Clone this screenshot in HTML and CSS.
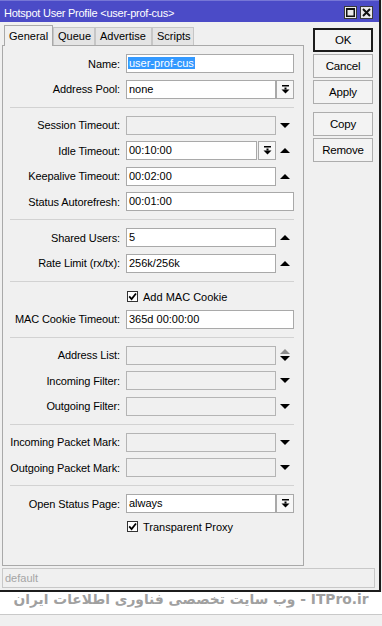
FILE: index.html
```html
<!DOCTYPE html>
<html lang="en">
<head>
  <meta charset="UTF-8" />
  <title>Hotspot User Profile</title>
  <link rel="stylesheet" href="styles.css">
</head>
<body>
  <div class="window">
    <div class="titlebar">
      <span class="title">Hotspot User Profile &lt;user-prof-cus&gt;</span>
      <div class="wbtns">
        <span class="wbtn"><svg width="9" height="9" viewBox="0 0 9 9"><rect x="0.75" y="0.75" width="7.5" height="7.5" fill="none" stroke="#111" stroke-width="1.5"/><rect x="0" y="0" width="9" height="2" fill="#111"/></svg></span>
        <span class="wbtn"><svg width="9" height="9" viewBox="0 0 9 9"><path d="M1 1 L8 8 M8 1 L1 8" stroke="#111" stroke-width="2"/></svg></span>
      </div>
    </div>

    <div class="content">
      <div class="main">
        <div class="tabs">
          <span class="tab active">General</span>
          <span class="tab t-queue">Queue</span>
          <span class="tab t-adv">Advertise</span>
          <span class="tab t-scripts">Scripts</span>
        </div>

        <div class="panel">
          <div class="row">
            <span class="lbl">Name:</span>
            <span class="field wide"><span class="sel">user-prof-cus</span></span>
          </div>
          <div class="row">
            <span class="lbl">Address Pool:</span>
            <span class="field">none</span>
            <span class="drop"><svg width="9" height="9" viewBox="0 0 9 9"><rect x="1" y="0" width="7" height="1.5"/><rect x="3.5" y="2.5" width="2" height="2"/><polygon points="0.5,4.5 8.5,4.5 4.5,8.5"/></svg></span>
          </div>
          <div class="sep"></div>

          <div class="row">
            <span class="lbl">Session Timeout:</span>
            <span class="field off"></span>
            <span class="side"><svg width="10" height="5" viewBox="0 0 10 5"><polygon points="0,0 10,0 5,5"/></svg></span>
          </div>
          <div class="row">
            <span class="lbl">Idle Timeout:</span>
            <span class="field idle">00:10:00</span>
            <span class="drop gap"><svg width="9" height="9" viewBox="0 0 9 9"><rect x="1" y="0" width="7" height="1.5"/><rect x="3.5" y="2.5" width="2" height="2"/><polygon points="0.5,4.5 8.5,4.5 4.5,8.5"/></svg></span>
            <span class="side"><svg width="10" height="5" viewBox="0 0 10 5"><polygon points="0,5 10,5 5,0"/></svg></span>
          </div>
          <div class="row">
            <span class="lbl">Keepalive Timeout:</span>
            <span class="field">00:02:00</span>
            <span class="side"><svg width="10" height="5" viewBox="0 0 10 5"><polygon points="0,5 10,5 5,0"/></svg></span>
          </div>
          <div class="row">
            <span class="lbl">Status Autorefresh:</span>
            <span class="field wide">00:01:00</span>
          </div>
          <div class="sep"></div>

          <div class="row">
            <span class="lbl">Shared Users:</span>
            <span class="field">5</span>
            <span class="side"><svg width="10" height="5" viewBox="0 0 10 5"><polygon points="0,5 10,5 5,0"/></svg></span>
          </div>
          <div class="row">
            <span class="lbl">Rate Limit (rx/tx):</span>
            <span class="field">256k/256k</span>
            <span class="side"><svg width="10" height="5" viewBox="0 0 10 5"><polygon points="0,5 10,5 5,0"/></svg></span>
          </div>
          <div class="sep"></div>

          <div class="row short">
            <span class="check"><span class="box"><svg width="9" height="9" viewBox="0 0 9 9"><path d="M1.2 4.4 L3.6 7 L8 1.5" fill="none" stroke="#000" stroke-width="1.8"/></svg></span>Add MAC Cookie</span>
          </div>
          <div class="row">
            <span class="lbl">MAC Cookie Timeout:</span>
            <span class="field wide">365d 00:00:00</span>
          </div>
          <div class="sep"></div>

          <div class="row">
            <span class="lbl">Address List:</span>
            <span class="field off"></span>
            <span class="side"><svg width="10" height="12" viewBox="0 0 10 12"><polygon points="0,5 10,5 5,0" fill="#8c8c8c"/><polygon points="0,7 10,7 5,12"/></svg></span>
          </div>
          <div class="row">
            <span class="lbl">Incoming Filter:</span>
            <span class="field off"></span>
            <span class="side"><svg width="10" height="5" viewBox="0 0 10 5"><polygon points="0,0 10,0 5,5"/></svg></span>
          </div>
          <div class="row">
            <span class="lbl">Outgoing Filter:</span>
            <span class="field off"></span>
            <span class="side"><svg width="10" height="5" viewBox="0 0 10 5"><polygon points="0,0 10,0 5,5"/></svg></span>
          </div>
          <div class="sep"></div>

          <div class="row">
            <span class="lbl">Incoming Packet Mark:</span>
            <span class="field off"></span>
            <span class="side"><svg width="10" height="5" viewBox="0 0 10 5"><polygon points="0,0 10,0 5,5"/></svg></span>
          </div>
          <div class="row">
            <span class="lbl">Outgoing Packet Mark:</span>
            <span class="field off"></span>
            <span class="side"><svg width="10" height="5" viewBox="0 0 10 5"><polygon points="0,0 10,0 5,5"/></svg></span>
          </div>
          <div class="sep"></div>

          <div class="row">
            <span class="lbl">Open Status Page:</span>
            <span class="field">always</span>
            <span class="drop"><svg width="9" height="9" viewBox="0 0 9 9"><rect x="1" y="0" width="7" height="1.5"/><rect x="3.5" y="2.5" width="2" height="2"/><polygon points="0.5,4.5 8.5,4.5 4.5,8.5"/></svg></span>
          </div>
          <div class="row short">
            <span class="check"><span class="box"><svg width="9" height="9" viewBox="0 0 9 9"><path d="M1.2 4.4 L3.6 7 L8 1.5" fill="none" stroke="#000" stroke-width="1.8"/></svg></span>Transparent Proxy</span>
          </div>
        </div>
      </div>

      <div class="actions">
        <span class="btn default">OK</span>
        <span class="btn">Cancel</span>
        <span class="btn">Apply</span>
        <span class="btn spaced">Copy</span>
        <span class="btn">Remove</span>
      </div>
    </div>

    <div class="status">default</div>
  </div>

  <div class="watermark">ITPro.ir - وب سایت تخصصی فناوری اطلاعات ایران</div>
</body>
</html>
```
FILE: styles.css
```css
/* Base */
* {
  box-sizing: border-box;
}
body {
  margin: 0;
  width: 382px;
  height: 626px;
  overflow: hidden;
  background: #f0f0f0;
  color: #000;
  font-family: 'Liberation Sans', Arial, sans-serif;
  font-size: 11px;
}

/* Window frame */
.window {
  width: 381px;
  height: 592px;
  background: #f0f0f0;
  border-right: 2px solid #1c1c1c;
  border-bottom: 2px solid #1c1c1c;
}
.titlebar {
  height: 22px;
  background: #4b4bc7;
  border-top: 1px solid #7676d6;
  color: #fff;
  padding: 0 4px;
  display: flex;
  align-items: center;
  justify-content: space-between;
}
.title {
  letter-spacing: -0.25px;
  padding-top: 2px;
}
.wbtns {
  display: flex;
  gap: 3px;
  margin-right: 2px;
  margin-top: 2px;
}
.wbtn {
  width: 13px;
  height: 13px;
  background: #e9e9e9;
  border: 1px solid #3a3a3a;
  display: flex;
  align-items: center;
  justify-content: center;
}

.content {
  display: flex;
  padding: 3px 0 0 2px;
}
.main {
  width: 302px;
}

/* Tabs */
.tabs {
  display: flex;
  align-items: flex-end;
  height: 20px;
  padding-left: 2px;
  position: relative;
  z-index: 1;
}
.tab {
  height: 18px;
  line-height: 17px;
  padding-left: 4px;
  background: #e4e4e4;
  border: 1px solid #c6c6c6;
  border-bottom: none;
  white-space: nowrap;
}
.tab.active {
  width: 49px;
  height: 21px;
  line-height: 20px;
  margin-bottom: -1px;
  background: #f0f0f0;
  border-color: #a9a9a9;
}
.t-queue { width: 42px; }
.t-adv { width: 57px; }
.t-scripts { width: 42px; }

.panel {
  height: 521px;
  border: 1px solid #a9a9a9;
  padding-top: 5px;
}

/* Form rows */
.row {
  display: flex;
  align-items: center;
  height: 25.5px;
}
.row.short {
  height: 20px;
}
.lbl {
  width: 117px;
  margin-right: 6px;
  text-align: right;
  white-space: nowrap;
  letter-spacing: -0.1px;
}
.field {
  width: 150px;
  height: 19px;
  line-height: 17px;
  padding-left: 2px;
  background: #fff;
  border: 1px solid #a9a9a9;
  white-space: nowrap;
}
.field.wide { width: 168px; }
.field.idle { width: 131px; }
.field.off {
  background: #f0f0f0;
  border-color: #b4b4b4;
}
.sel {
  margin-left: -1px;
  padding: 0 1px;
  background: #3399ff;
  color: #fff;
}
.drop {
  width: 18px;
  height: 19px;
  background: #f7f7f7;
  border: 1px solid #a9a9a9;
  display: flex;
  align-items: center;
  justify-content: center;
}
.drop.gap {
  margin-left: 1px;
}
.side {
  width: 18px;
  display: flex;
  align-items: center;
  justify-content: center;
}
.check {
  margin-left: 124px;
  display: flex;
  align-items: center;
}
.box {
  width: 11px;
  height: 11px;
  margin-right: 5px;
  background: #fff;
  border: 1px solid #333;
  display: flex;
  align-items: center;
  justify-content: center;
}
.sep {
  border-top: 1px solid #d2d2d2;
  margin: 4.75px 9px 4.75px 7px;
}

/* Side buttons */
.actions {
  width: 60px;
  margin-left: 9px;
  padding-top: 3px;
  display: flex;
  flex-direction: column;
  gap: 2px;
}
.btn {
  height: 24px;
  line-height: 22px;
  text-align: center;
  background: #f3f3f3;
  border: 1px solid #adadad;
  letter-spacing: -0.2px;
  font-size: 11.5px;
}
.btn.default {
  border: 2px solid #1b1b1b;
  line-height: 20px;
}
.btn.spaced {
  margin-top: 6px;
}

.status {
  width: 373px;
  height: 20px;
  margin: 2px 0 0 2px;
  padding-left: 2px;
  line-height: 18px;
  color: #a5a5a5;
  border: 1px solid #c8c8c8;
}

/* Under the window */
.watermark {
  height: 23px;
  background: #fff;
  border-bottom: 1px solid #c9c9c9;
  direction: rtl;
  text-align: center;
  white-space: nowrap;
  overflow: hidden;
  color: #a0a0a0;
  font-family: 'DejaVu Sans', sans-serif;
  font-weight: bold;
  font-size: 13.8px;
  line-height: 14px;
}
```
